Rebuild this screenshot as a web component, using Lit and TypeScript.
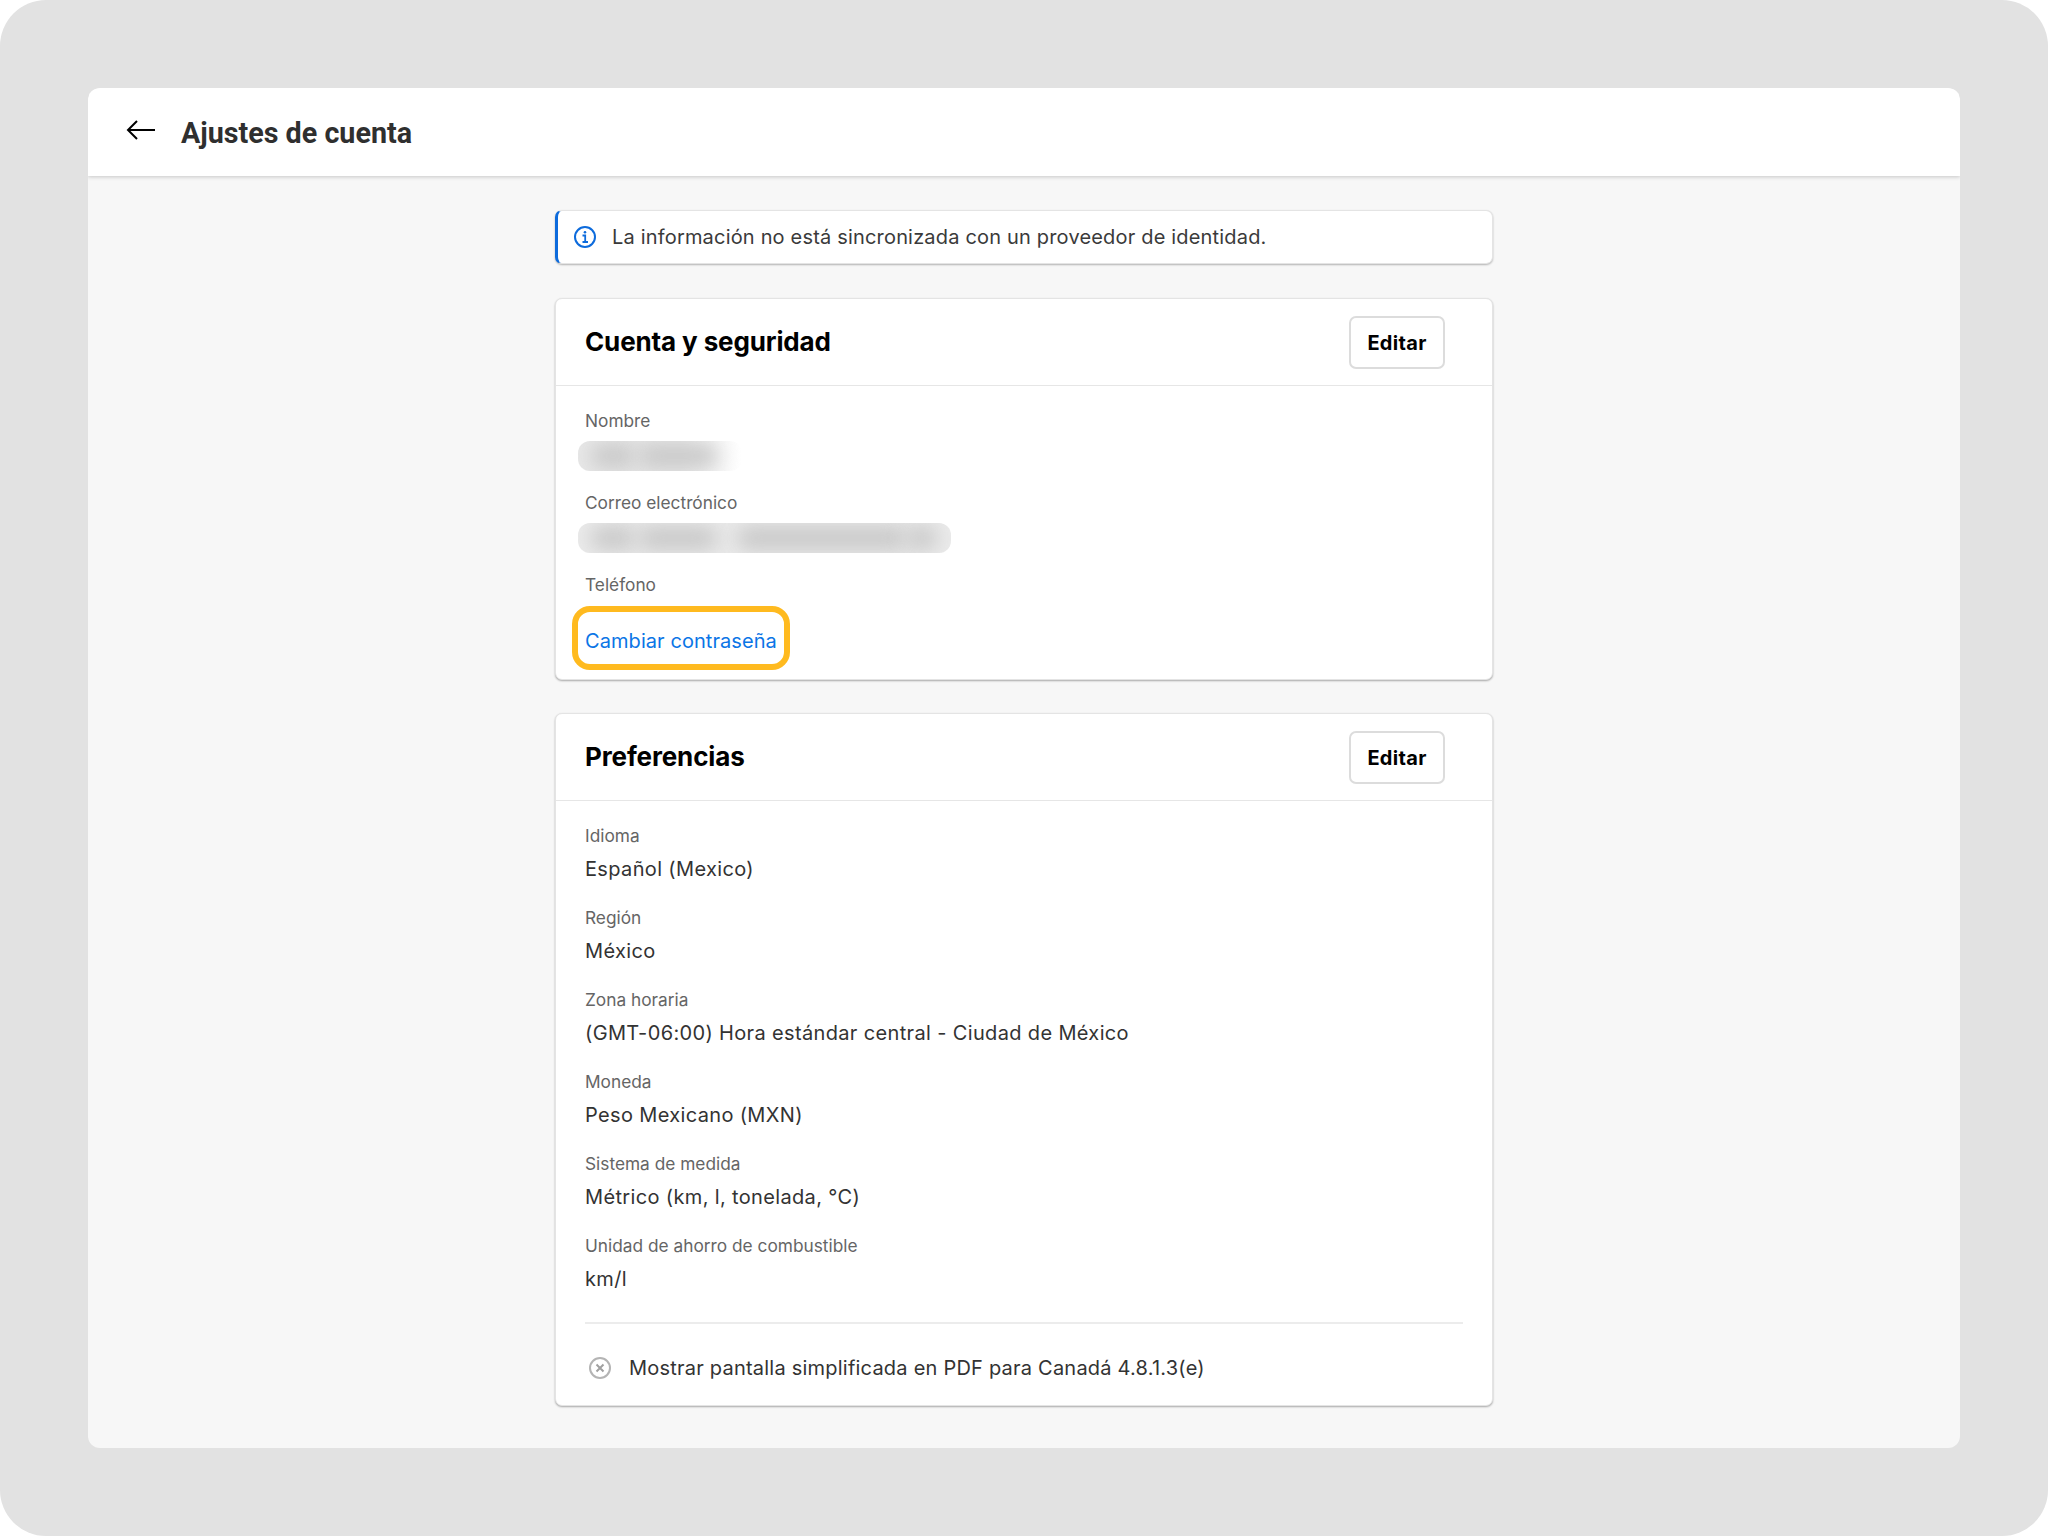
import { LitElement, html, css } from 'lit';
import { customElement } from 'lit/decorators.js';

const accountRows = [
  { label: 'Nombre', blur: 'short' },
  { label: 'Correo electrónico', blur: 'long' },
];

const prefRows = [
  { label: 'Idioma', value: 'Español (Mexico)' },
  { label: 'Región', value: 'México' },
  { label: 'Zona horaria', value: '(GMT-06:00) Hora estándar central - Ciudad de México' },
  { label: 'Moneda', value: 'Peso Mexicano (MXN)' },
  { label: 'Sistema de medida', value: 'Métrico (km, l, tonelada, °C)' },
  { label: 'Unidad de ahorro de combustible', value: 'km/l' },
];

@customElement('app-root')
export class AppRoot extends LitElement {
  static styles = css`
    :host {
      display: block;
      width: 2048px;
      height: 1536px;
      background: #fff;
      font-family: Inter, 'Liberation Sans', sans-serif;
    }

    .frame {
      box-sizing: border-box;
      height: 1536px;
      padding: 88px;
      background: #e2e2e2;
      border-radius: 46px;
    }

    .window {
      height: 1360px;
      background: #f7f7f7;
      border-radius: 12px;
      overflow: hidden;
    }

    .topbar {
      display: flex;
      align-items: center;
      box-sizing: border-box;
      height: 88px;
      padding-left: 38px;
      background: #fff;
      box-shadow: 0 1px 4px rgba(0, 0, 0, 0.2);
      position: relative;
    }

    .topbar svg {
      display: block;
      width: 30px;
      height: 24px;
      margin-top: -4px;
    }

    .topbar h1 {
      margin: 1px 0 0 25px;
      font: 700 28.7px/34px Roboto, sans-serif;
      color: #2f2f2f;
    }

    .column {
      width: 938px;
      margin: 0 auto;
      padding-top: 34px;
    }

    .banner {
      display: flex;
      align-items: center;
      box-sizing: border-box;
      height: 54px;
      padding-left: 15px;
      gap: 15px;
      background: #fff;
      border: 1px solid #e4e4e4;
      border-left: 3px solid #0d6bdc;
      border-radius: 7px;
      box-shadow: 0 1px 2px rgba(0, 0, 0, 0.28);
      font-size: 20px;
      letter-spacing: 0.18px;
      color: #3a3a3a;
      margin-bottom: 34px;
    }

    .banner svg {
      width: 24px;
      height: 24px;
      flex: none;
    }

    .card {
      box-sizing: border-box;
      background: #fff;
      border: 1px solid #e4e4e4;
      border-radius: 7px;
      box-shadow: 0 1px 2px rgba(0, 0, 0, 0.32);
    }

    .card + .card {
      margin-top: 33px;
    }

    .card-head {
      display: flex;
      align-items: center;
      justify-content: space-between;
      box-sizing: border-box;
      height: 87px;
      padding: 0 47px 0 29px;
      border-bottom: 1px solid #e6e6e6;
    }

    .card-head h2 {
      margin: -1px 0 0;
      font-size: 26px;
      font-weight: 700;
      letter-spacing: -0.13px;
      color: #000;
    }

    .edit {
      box-sizing: border-box;
      width: 96px;
      height: 53px;
      padding: 1px 0 0;
      background: #fff;
      border: 2px solid #dcdcdc;
      border-radius: 7px;
      font: 700 20px Inter, sans-serif;
      letter-spacing: 0.3px;
      color: #000;
    }

    .card-body {
      padding: 22px 29px 0;
    }

    .label {
      font-size: 17.3px;
      line-height: 26px;
      color: #656565;
    }

    .value {
      margin: 5px 0 21px;
      font-size: 20px;
      line-height: 30px;
      letter-spacing: 0.35px;
      color: #333;
    }

    .blur {
      position: relative;
      height: 30px;
      margin: 7px 0 19px -7px;
      overflow: hidden;
      border-radius: 12px;
      background: #ebebeb;
    }

    .blur.short {
      width: 164px;
      background: linear-gradient(90deg, #e8e8e8 0%, #e8e8e8 62%, #fff 100%);
    }

    .blur.long {
      width: 373px;
    }

    .smear {
      position: absolute;
      top: 3px;
      height: 24px;
      background: #c8c8c8;
      border-radius: 12px;
      filter: blur(10px);
    }

    .smear.a {
      left: 12px;
      width: 46px;
    }

    .smear.b {
      left: 60px;
      width: 80px;
    }

    .smear.c {
      left: 158px;
      width: 172px;
    }

    .smear.d {
      left: 328px;
      width: 32px;
    }

    .phone {
      margin-bottom: 28px;
    }

    .link-wrap {
      position: relative;
      height: 30px;
      padding-bottom: 23px;
    }

    .link {
      font-size: 20px;
      line-height: 30px;
      letter-spacing: 0.07px;
      color: #0b75e6;
      text-decoration: none;
    }

    .highlight {
      position: absolute;
      left: -13px;
      top: -20px;
      box-sizing: border-box;
      width: 218px;
      height: 64px;
      border: 6px solid #ffba1f;
      border-radius: 18px;
      pointer-events: none;
    }

    .divider {
      height: 2px;
      margin-top: 28px;
      background: #ececec;
    }

    .toggle {
      display: flex;
      align-items: center;
      box-sizing: border-box;
      gap: 17px;
      height: 81px;
      padding: 7px 0 0 3px;
      font-size: 20px;
      letter-spacing: 0.22px;
      color: #333;
    }

    .toggle svg {
      width: 24px;
      height: 24px;
      flex: none;
    }
  `;

  renderHead(title: string) {
    return html`
      <div class="card-head">
        <h2>${title}</h2>
        <button class="edit">Editar</button>
      </div>
    `;
  }

  render() {
    return html`
      <div class="frame">
        <div class="window">
          <header class="topbar">
            <svg viewBox="0 0 30 24" fill="none" stroke="#000" stroke-width="2">
              <path d="M29 12H2M11 3l-9 9 9 9" />
            </svg>
            <h1>Ajustes de cuenta</h1>
          </header>

          <div class="column">
            <div class="banner">
              <svg viewBox="0 0 24 24" fill="none" stroke="#0d6bdc" stroke-width="2">
                <circle cx="12" cy="12" r="10" />
                <path d="M9.5 10.5H12.2V17M9.5 17H15" stroke-width="1.8" />
                <circle cx="12" cy="7.2" r="1.3" fill="#0d6bdc" stroke="none" />
              </svg>
              La información no está sincronizada con un proveedor de identidad.
            </div>

            <section class="card">
              ${this.renderHead('Cuenta y seguridad')}
              <div class="card-body">
                ${accountRows.map(row => html`
                  <div class="label">${row.label}</div>
                  <div class="blur ${row.blur}">
                    <span class="smear a"></span>
                    <span class="smear b"></span>
                    ${row.blur === 'long' ? html`
                      <span class="smear c"></span>
                      <span class="smear d"></span>
                    ` : ''}
                  </div>
                `)}
                <div class="label phone">Teléfono</div>
                <div class="link-wrap">
                  <a class="link">Cambiar contraseña</a>
                  <span class="highlight"></span>
                </div>
              </div>
            </section>

            <section class="card">
              ${this.renderHead('Preferencias')}
              <div class="card-body">
                ${prefRows.map(row => html`
                  <div class="label">${row.label}</div>
                  <div class="value">${row.value}</div>
                `)}
                <div class="divider"></div>
                <div class="toggle">
                  <svg viewBox="0 0 24 24" fill="none" stroke="#b4b4b4" stroke-width="2">
                    <circle cx="12" cy="12" r="10" />
                    <path d="M8.5 8.5l7 7M15.5 8.5l-7 7" stroke="#a0a0a0" />
                  </svg>
                  Mostrar pantalla simplificada en PDF para Canadá 4.8.1.3(e)
                </div>
              </div>
            </section>
          </div>
        </div>
      </div>
    `;
  }
}
